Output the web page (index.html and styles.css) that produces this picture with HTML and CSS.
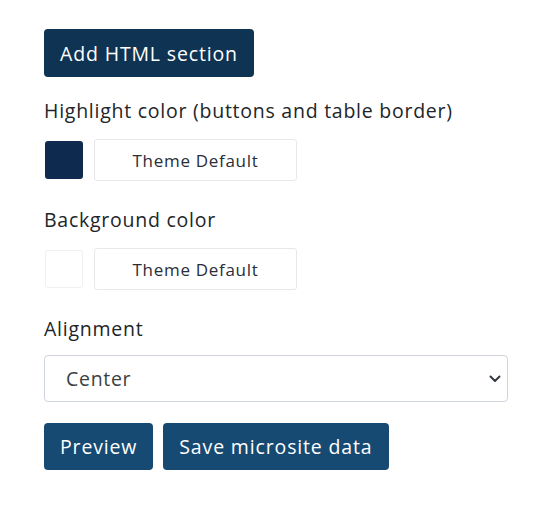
FILE: index.html
```html
<!DOCTYPE html>
<html lang="en">
<head>
<meta charset="utf-8">
<title>Microsite settings</title>
<link rel="stylesheet" href="styles.css">
</head>
<body>
<main class="panel">
  <button class="btn btn-dark" type="button">Add HTML section</button>

  <div class="field field-first">
    <label class="label">Highlight color (buttons and table border)</label>
    <div class="color-row">
      <span class="swatch swatch-navy"></span>
      <button class="theme-btn" type="button">Theme Default</button>
    </div>
  </div>

  <div class="field">
    <label class="label">Background color</label>
    <div class="color-row">
      <span class="swatch swatch-white"></span>
      <button class="theme-btn" type="button">Theme Default</button>
    </div>
  </div>

  <div class="field">
    <label class="label label-tight">Alignment</label>
    <div class="select">
      <span class="select-value">Center</span>
      <svg class="chevron" width="12" height="8" viewBox="0 0 12 8"><path d="M1.5 1.5 L6 6 L10.5 1.5" fill="none" stroke="#343a40" stroke-width="2" stroke-linecap="round" stroke-linejoin="round"/></svg>
    </div>
  </div>

  <div class="actions">
    <button class="btn btn-blue" type="button">Preview</button>
    <button class="btn btn-blue" type="button">Save microsite data</button>
  </div>
</main>
</body>
</html>
```
FILE: styles.css
```css
* { box-sizing: border-box; }
html, body { margin: 0; padding: 0; background: #fff; }
body {
  font-family: "Open Sans", "Noto Sans", sans-serif;
  color: #212529;
}
.panel {
  padding: 29px 35px 0 44px;
  display: flex;
  flex-direction: column;
  align-items: flex-start;
}
.btn {
  font-family: inherit;
  font-size: 19.5px;
  font-weight: 500;
  letter-spacing: 0.85px;
  color: #fff;
  border: none;
  border-radius: 4px;
  height: 48px;
  padding: 0 16px;
  cursor: pointer;
}
.btn-dark { background: #0f3353; }
.btn-blue { background: #174a73; height: 47px; }
.field { display: flex; flex-direction: column; width: 100%; margin-top: 25px; }
.field-first { margin-top: 20px; }
.label {
  font-size: 19.5px;
  line-height: 28px;
  letter-spacing: 0.75px;
  color: #212529;
  margin-bottom: 14px;
}
.label-tight { margin-bottom: 12px; }
.color-row { display: flex; align-items: center; gap: 11px; }
.swatch {
  width: 38px;
  height: 38px;
  border-radius: 3px;
  margin-left: 1px;
}
.swatch-navy { background: #0f2a4f; }
.swatch-white { background: #fff; border: 1px solid #f0f0f0; }
.theme-btn {
  width: 203px;
  height: 42px;
  background: #fff;
  border: 1px solid #e8e8e8;
  border-radius: 3px;
  font-family: inherit;
  font-size: 17px;
  letter-spacing: 0.7px;
  color: #2b2d3a;
}
.select {
  width: 464px;
  height: 47px;
  border: 1px solid #ced4da;
  border-radius: 4px;
  display: flex;
  align-items: center;
  justify-content: space-between;
  padding: 0 5px 0 21px;
}
.select-value { font-size: 19.5px; letter-spacing: 0.7px; color: #3a3f44; }
.chevron { margin-right: 1px; }
.actions { display: flex; gap: 10px; margin-top: 21px; }
```
